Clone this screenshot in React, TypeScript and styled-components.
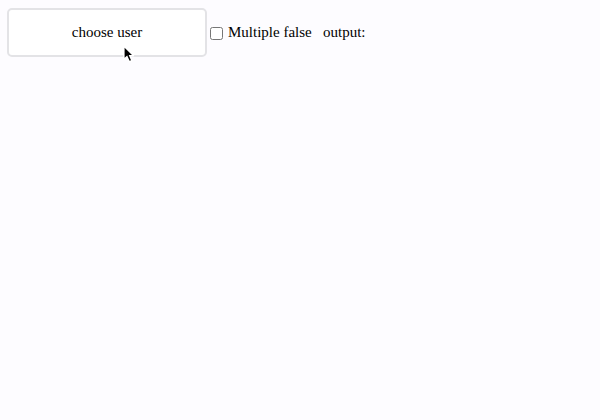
import React from "react";
import styled, { createGlobalStyle } from "styled-components";

const Global = createGlobalStyle`
  html, body { background: #fdfcff; }
  body {
    margin: 8px 7px;
    font-family: "Liberation Serif", "Times New Roman", serif;
    font-size: 15px;
    color: #000;
  }
`;

const Page = styled.div`
  position: relative;
  min-height: 400px;
`;

const Row = styled.div`
  display: flex;
  align-items: center;
`;

const ChooseButton = styled.button`
  width: 200px;
  height: 49px;
  background: #ffffff;
  border: 2px solid #e3e3e6;
  border-radius: 5px;
  font-family: "Liberation Serif", "Times New Roman", serif;
  font-size: 15px;
  color: #000;
  padding: 0;
  margin: 0;
`;

const Check = styled.input`
  width: 13px;
  height: 13px;
  margin: 1px 5px 0 3px;
`;

const Label = styled.span`
  white-space: pre;
  margin-bottom: 1px;
`;

const Cursor = styled.svg`
  position: absolute;
  left: 116px;
  top: 38px;
  z-index: 2;
  overflow: visible;
  pointer-events: none;
`;

export default function App() {
  return (
    <>
      <Global />
      <Page>
        <Row>
          <ChooseButton>choose user</ChooseButton>
          <Check type="checkbox" />
          <Label>Multiple false   output:</Label>
        </Row>
        <Cursor width="12" height="17" viewBox="0 0 12 17">
          <path
            d="M1 0.5 L1 13.2 L4 10.4 L6.3 15.8 L8.6 14.8 L6.4 9.8 L10.4 9.8 Z"
            fill="#fff"
            stroke="#fff"
            strokeWidth="1.6"
            strokeLinejoin="round"
          />
          <path d="M1.6 1.8 L1.6 11.8 L4.2 9.4 L6.6 14.8 L8 14.2 L5.7 9 L9 9 Z" fill="#000" />
        </Cursor>
      </Page>
    </>
  );
}
